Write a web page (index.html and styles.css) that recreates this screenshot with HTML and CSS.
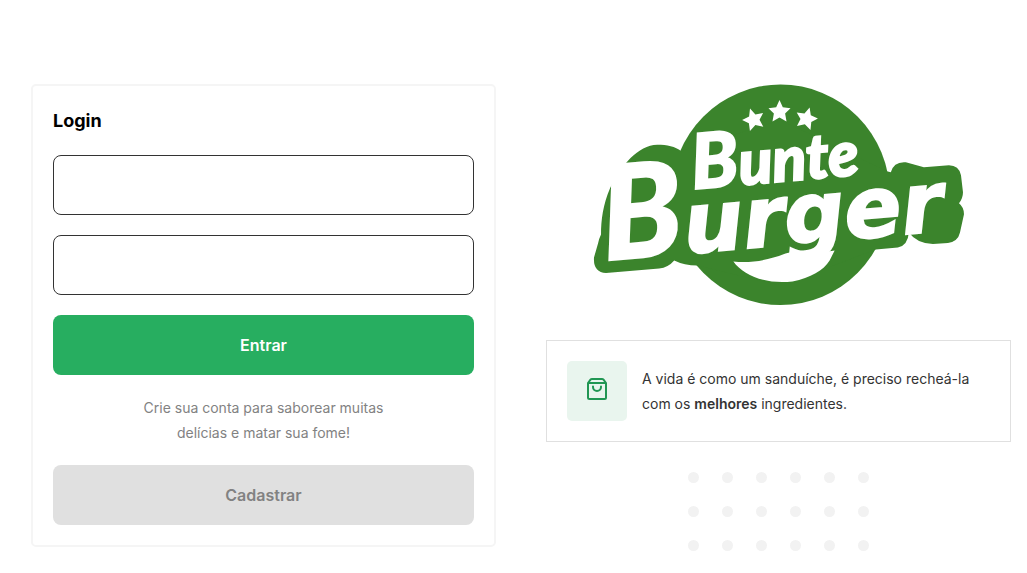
FILE: index.html
```html
<!DOCTYPE html>
<html lang="pt-BR">
<head>
  <meta charset="utf-8">
  <meta name="viewport" content="width=device-width, initial-scale=1">
  <title>Bunte Burger</title>
  <link rel="stylesheet" href="styles.css">
</head>
<body>
  <main class="page">
    <form class="panel">
      <h1 class="title">Login</h1>
      <input class="field" type="email" name="email" aria-label="Email">
      <input class="field" type="password" name="password" aria-label="Senha">
      <button class="button button-primary" type="submit">Entrar</button>
      <p class="hint">Crie sua conta para saborear muitas delícias e matar sua fome!</p>
      <button class="button button-muted" type="button">Cadastrar</button>
    </form>

    <section class="brand">
      <svg class="logo" viewBox="593 84 371 221" role="img" aria-label="Bunte Burger">
        <g class="logo-base">
          <ellipse cx="780" cy="194.500" rx="109" ry="110"/>
          <path d="M681 151C675 146 667 144.500 657 144.500C638 145 621 165 610 188C603 204 601 220 601 234Q599 238 598 243L594 257Q593 272 606 272.500L659 268Q668 267 674 260Q684 265 697 265L780 285L875 249L897 247Q907 245 908 232Q916 243 932 243.500L947 242.500Q957 241 959 232L963 214Q963 207 958 203Q962 198 962 192L960 175Q958 165 948 165L923 167L905 162Q893 161 890 172L886 171L780 120Z"/>
        </g>
        <g class="logo-mark">
          <path id="star" d="M779 100L782.300 107.200L790 108.300L784.600 113.500L786 121.300L779 117.300L772 121.300L773.400 113.500L768 108.300L775.700 107.200Z"/>
          <use href="#star" transform="translate(-26 8) rotate(-18 779 111)"/>
          <use href="#star" transform="translate(27 7) rotate(16 779 111)"/>
          <path d="M733 261C752 263 770 259 785 253Q799 248 814 253L834 250L829 260C823 270 810 277 792 281C765 284 743 275 733 261Z"/>
        </g>
        <text class="logo-text" transform="translate(693 189) rotate(-5)"><tspan class="bunte-initial">B</tspan><tspan class="bunte-rest">unte</tspan></text>
        <text class="logo-text" transform="translate(605 260) rotate(-5)"><tspan class="burger-initial">B</tspan><tspan class="burger-rest">urger</tspan></text>
      </svg>

      <div class="quote">
        <div class="quote-icon">
          <svg class="bag" viewBox="0 0 24 24" aria-hidden="true">
            <path d="M3 6L5.500 2.600Q6 2 7 2H17Q18 2 18.500 2.600L21 6V20.500Q21 22 19.500 22H4.500Q3 22 3 20.500ZM3 6H21M8 9.500V10A4 4 0 0 0 16 10V9.500"/>
          </svg>
        </div>
        <p class="quote-text">A vida é como um sanduíche, é preciso recheá-la com os <strong>melhores</strong> ingredientes.</p>
      </div>

      <svg class="dots" viewBox="0 0 181 79" aria-hidden="true">
        <defs>
          <pattern id="dot" width="34" height="34" patternUnits="userSpaceOnUse">
            <circle cx="5.500" cy="5.500" r="5.500"/>
          </pattern>
        </defs>
        <rect width="181" height="79" fill="url(#dot)"/>
      </svg>
    </section>
  </main>
</body>
</html>
```
FILE: styles.css
```css
* {
  box-sizing: border-box;
}

body {
  margin: 0;
  background: #fff;
  color: #333;
  font-family: Inter, "Liberation Sans", sans-serif;
  font-size: 14px;
  line-height: 25px;
}

.page {
  display: grid;
  grid-template-columns: 1fr 1fr;
  align-items: start;
  gap: 50px;
  padding: 84px 16px 20px 31px;
}

.panel {
  display: flex;
  flex-direction: column;
  gap: 20px;
  padding: 20px;
  border: 2px solid #f5f5f5;
  border-radius: 5px;
}

.title {
  margin: 0;
  color: #000;
  font-size: 18px;
  font-weight: 700;
  line-height: 29px;
}

.field,
.button {
  width: 100%;
  height: 60px;
  padding: 0 20px;
  border-radius: 8px;
  font: inherit;
}

.field {
  border: 1px solid #333;
  background: #fff;
}

.button {
  border: 0;
  font-size: 16px;
  font-weight: 600;
}

.button-primary {
  background: #27ae60;
  color: #fff;
}

.button-muted {
  background: #e0e0e0;
  color: #828282;
}

.hint {
  max-width: 270px;
  margin: 0 auto;
  color: #828282;
  text-align: center;
}

.brand {
  display: flex;
  flex-direction: column;
  align-items: center;
}

.logo {
  width: 80%;
  margin-bottom: 34px;
}

.logo-base {
  fill: #3b842c;
}

.logo-mark,
.logo-text {
  fill: #fff;
}

.logo-text {
  font-family: Lato, sans-serif;
  font-style: italic;
  font-weight: 900;
  line-height: 1;
  stroke: #fff;
  stroke-width: 2;
}

.bunte-initial {
  font-size: 76px;
}

.bunte-rest {
  font-size: 62px;
}

.burger-initial {
  font-size: 130px;
}

.burger-rest {
  font-family: "DejaVu Sans", sans-serif;
  font-size: 84px;
  font-weight: 700;
}

.quote {
  display: flex;
  align-items: center;
  gap: 15px;
  width: 100%;
  padding: 20px;
  border: 1px solid #e0e0e0;
}

.quote-icon {
  display: flex;
  flex: none;
  align-items: center;
  justify-content: center;
  width: 60px;
  height: 60px;
  padding-bottom: 4px;
  border-radius: 5px;
  background: #e9f5ee;
}

.bag {
  width: 24px;
  fill: none;
  stroke: #219653;
  stroke-width: 2;
  stroke-linecap: round;
  stroke-linejoin: round;
}

.quote-text {
  margin: 0;
}

.quote-text strong {
  font-weight: 600;
}

.dots {
  width: 181px;
  margin-top: 30px;
  fill: #f2f2f2;
}
```
